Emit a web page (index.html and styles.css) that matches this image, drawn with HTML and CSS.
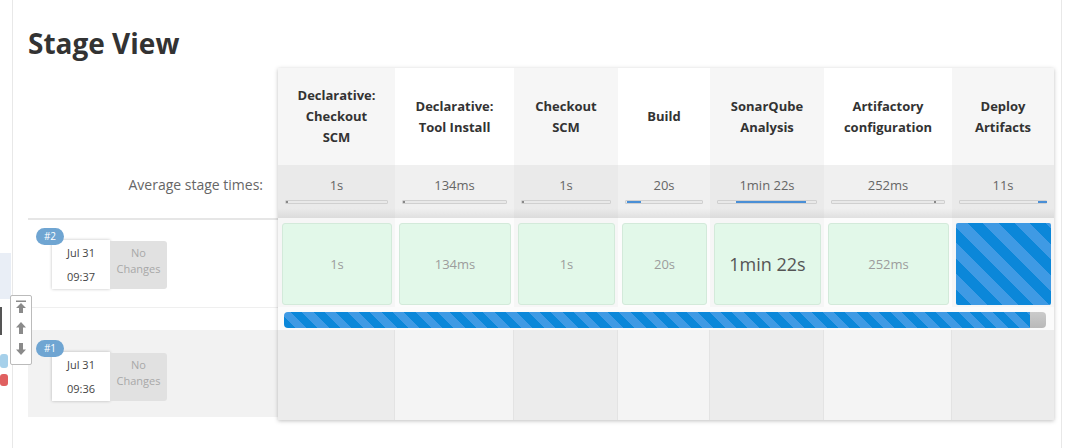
FILE: index.html
```html
<!DOCTYPE html>
<html>
<head>
<meta charset="utf-8">
<title>Stage View</title>
<link rel="stylesheet" href="styles.css">
</head>
<body>
<div class="page">
  <aside class="sidebar">
    <div class="sb-hl"></div>
    <div class="sb-dark"></div>
    <div class="sb-ico blue"></div>
    <div class="sb-ico red"></div>
  </aside>
  <main class="main">
    <h1 class="title">Stage View</h1>
    <div class="sv">
      <div class="labels">
        <div class="l-head"></div>
        <div class="l-avg">Average stage times:</div>
        <div class="l-build b2">
          <span class="badge">#2</span>
          <div class="bbox">
            <div class="date"><span>Jul 31</span><span>09:37</span></div>
            <div class="nochg">No<br>Changes</div>
          </div>
        </div>
        <div class="l-gap"></div>
        <div class="l-build b1">
          <span class="badge">#1</span>
          <div class="bbox">
            <div class="date"><span>Jul 31</span><span>09:36</span></div>
            <div class="nochg">No<br>Changes</div>
          </div>
        </div>
      </div>
      <div class="table">
        <div class="head cols">
          <div class="hc">Declarative:<br>Checkout<br>SCM</div>
          <div class="hc">Declarative:<br>Tool Install</div>
          <div class="hc">Checkout<br>SCM</div>
          <div class="hc">Build</div>
          <div class="hc">SonarQube<br>Analysis</div>
          <div class="hc">Artifactory<br>configuration</div>
          <div class="hc">Deploy<br>Artifacts</div>
        </div>
        <div class="avg cols">
          <div class="ac"><span>1s</span><div class="mini"><i class="tick" style="margin-left:0;width:2px"></i></div></div>
          <div class="ac"><span>134ms</span><div class="mini"><i class="tick" style="margin-left:0;width:2px"></i></div></div>
          <div class="ac"><span>1s</span><div class="mini"><i class="tick" style="margin-left:0;width:2px"></i></div></div>
          <div class="ac"><span>20s</span><div class="mini"><i style="margin-left:1px;width:14px"></i></div></div>
          <div class="ac"><span>1min 22s</span><div class="mini"><i style="margin-left:18px;width:70px"></i></div></div>
          <div class="ac"><span>252ms</span><div class="mini"><i class="tick" style="margin-left:102px;width:2px"></i></div></div>
          <div class="ac"><span>11s</span><div class="mini"><i style="margin-left:78px;width:9px"></i></div></div>
        </div>
        <div class="run cols">
          <div class="rc"><div class="ok">1s</div></div>
          <div class="rc"><div class="ok">134ms</div></div>
          <div class="rc"><div class="ok">1s</div></div>
          <div class="rc"><div class="ok">20s</div></div>
          <div class="rc"><div class="ok big">1min 22s</div></div>
          <div class="rc"><div class="ok">252ms</div></div>
          <div class="rc"><div class="prog"></div></div>
        </div>
        <div class="pbar">
          <div class="bar"><div class="bar-fill"></div><div class="bar-rest"></div></div>
        </div>
        <div class="empty cols">
          <div class="ec"></div><div class="ec"></div><div class="ec"></div><div class="ec"></div><div class="ec"></div><div class="ec"></div><div class="ec"></div>
        </div>
      </div>
    </div>
  </main>
</div>
<div class="scroller">
  <svg width="12" height="14" viewBox="0 0 12 14"><rect x="1" y="0.5" width="10" height="1.5" fill="#8a8a8a"/><path d="M6 3 L1 8 L4 8 L4 13 L8 13 L8 8 L11 8 Z" fill="#8a8a8a"/></svg>
  <svg width="12" height="14" viewBox="0 0 12 14"><path d="M6 1 L1 6.5 L4 6.5 L4 13 L8 13 L8 6.5 L11 6.5 Z" fill="#8a8a8a"/></svg>
  <svg width="12" height="14" viewBox="0 0 12 14"><path d="M6 13 L1 7.5 L4 7.5 L4 1 L8 1 L8 7.5 L11 7.5 Z" fill="#8a8a8a"/></svg>
</div>
</body>
</html>
```

FILE: styles.css
```css
* { box-sizing: border-box; }
html, body { margin: 0; padding: 0; background: #fff; }
body {
  font-family: "Open Sans", "Noto Sans", sans-serif;
  color: #333;
  width: 1072px;
  height: 448px;
  overflow: hidden;
  position: relative;
}
.page { display: flex; height: 448px; }

.sidebar { width: 12px; flex: none; display: flex; flex-direction: column; align-items: flex-start; }
.sb-hl { margin-top: 253px; width: 11px; height: 46px; background: #e9eef6; }
.sb-dark { margin-top: 8px; width: 2px; height: 28px; background: #555; }
.sb-ico { width: 8px; height: 14px; border-radius: 3px; }
.sb-ico.blue { margin-top: 19px; background: #a6d0ea; }
.sb-ico.red { margin-top: 6px; background: #e06060; height: 12px; }

.main {
  width: 1050px;
  flex: none;
  border-left: 1px solid #e8e8e8;
  border-right: 1px solid #e8e8e8;
  padding-left: 15px;
}
.title {
  margin: 0 0 6px 0;
  padding-top: 24px;
  font-size: 28px;
  line-height: 38px;
  font-weight: 700;
  color: #333;
}

.sv { display: flex; }

.labels { width: 250px; display: flex; flex-direction: column; }
.l-head { height: 97px; }
.l-avg {
  height: 53px;
  padding: 11px 15px 0 0;
  text-align: right;
  font-size: 14px;
  line-height: 18px;
  color: #666;
}
.l-build { display: flex; flex-direction: column; align-items: flex-start; padding: 8px 0 0 8px; }
.b2 { height: 89px; border-top: 2px solid #e6e6e6; }
.l-gap { height: 23px; border-top: 1px solid #efefef; }
.b1 { height: 87px; background: #f2f2f2; padding-top: 10px; }
.badge {
  display: block;
  position: relative;
  z-index: 1;
  height: 17px;
  min-width: 28px;
  padding: 0 6px;
  border-radius: 9px;
  background: #6fa5d2;
  color: #fff;
  font-size: 10px;
  line-height: 17px;
  text-align: center;
}
.bbox { display: flex; margin: -5px 0 0 16px; }
.date {
  width: 58px;
  height: 49px;
  background: #fff;
  box-shadow: 0 0 3px rgba(0, 0, 0, 0.25);
  display: flex;
  flex-direction: column;
  align-items: center;
  padding-top: 6px;
  gap: 10px;
  font-size: 11px;
  line-height: 14px;
  color: #444;
}
.nochg {
  width: 57px;
  height: 48px;
  margin-top: 1px;
  background: #e1e1e1;
  border-radius: 0 3px 3px 0;
  color: #a8a8a8;
  font-size: 11px;
  line-height: 16px;
  text-align: center;
  padding-top: 4px;
}

.table {
  width: 776px;
  display: flex;
  flex-direction: column;
  background: #fff;
  box-shadow: 0 1px 4px rgba(0, 0, 0, 0.25);
}
.cols { display: grid; grid-template-columns: 117px 119px 104px 92px 114px 128px 102px; }

.head { height: 97px; }
.hc {
  display: flex;
  align-items: center;
  justify-content: center;
  text-align: center;
  font-weight: 700;
  font-size: 13px;
  line-height: 21px;
  color: #333;
  background: #fff;
}
.hc:nth-child(odd) { background: #f6f6f6; }

.avg { height: 53px; }
.ac {
  padding: 11px 7px 0;
  text-align: center;
  font-size: 13px;
  line-height: 18px;
  color: #666;
  background: linear-gradient(#f0f0f0 82%, #e0e0e0);
}
.ac:nth-child(odd) { background: linear-gradient(#eaeaea 82%, #dbdbdb); }
.mini {
  margin-top: 6px;
  height: 4px;
  background: #e9e9e9;
  border: 1px solid #d0d0d0;
  border-radius: 1px;
  display: flex;
}
.mini i { display: block; height: 100%; background: #4a8fd6; flex: none; }
.mini i.tick { background: #888; }

.run { height: 89px; }
.rc { padding: 5px 3px 2px 4px; background: #fcfcfc; }
.rc:nth-child(odd) { background: #f6f6f6; }
.ok {
  height: 100%;
  background: #e2f8e9;
  border: 1px solid #d3eada;
  border-radius: 3px;
  display: flex;
  align-items: center;
  justify-content: center;
  font-size: 13px;
  color: #9c9c9c;
}
.ok.big { font-size: 18px; color: #555; }
.prog {
  height: 100%;
  border-radius: 2px;
  background: repeating-linear-gradient(45deg, #0b87d9 0 11px, #3f9ae4 11px 22px);
}

.pbar { height: 23px; padding: 5px 8px 0 6px; background: #fbfbfb; }
.bar { height: 16px; display: flex; border-radius: 4px; overflow: hidden; }
.bar-fill { flex: 1; background: repeating-linear-gradient(45deg, #0b87d9 0 8px, #3f9ae4 8px 16px); }
.bar-rest { width: 16px; background: linear-gradient(#cbcbcb, #b9b9b9); }

.empty { height: 90px; }
.ec { background: #f4f4f4; border-right: 1px solid #e3e3e3; }
.ec:nth-child(odd) { background: #ececec; }
.ec:last-child { border-right: 0; }

.scroller {
  position: absolute;
  left: 10px;
  top: 295px;
  width: 22px;
  height: 70px;
  background: #fff;
  border: 1px solid #bbb;
  border-radius: 2px;
  display: flex;
  flex-direction: column;
  align-items: center;
  padding-top: 4px;
  gap: 7px;
}
.scroller svg { display: block; }
```
